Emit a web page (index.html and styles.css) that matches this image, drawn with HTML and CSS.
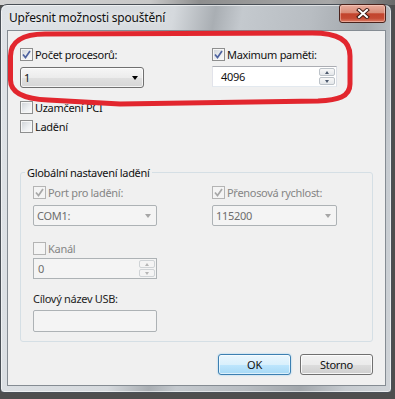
FILE: index.html
```html
<!DOCTYPE html>
<html lang="cs">
<head>
  <meta charset="UTF-8" />
  <meta name="viewport" content="width=device-width, initial-scale=1.0"/>
  <title>Upřesnit možnosti spouštění</title>
  <link rel="stylesheet" href="styles.css">
</head>
<body>
  <div class="window">
    <div class="titlebar">
      <span class="title">Upřesnit možnosti spouštění</span>
      <div class="close">
        <svg width="14" height="11" viewBox="0 0 14 11">
          <path class="x-out" d="M3 2 L11 9 M11 2 L3 9"/>
          <path class="x-in" d="M3 2 L11 9 M11 2 L3 9"/>
        </svg>
      </div>
    </div>

    <div class="client">
      <div class="top-grid">
        <div class="col">
          <div class="check">
            <span class="box on"><svg viewBox="0 0 11 11"><path d="M2 5.5 L4.5 8.5 L9 2"/></svg></span>
            <span>Počet procesorů:</span>
          </div>
          <div class="combo">
            <span>1</span>
            <span class="arrow"></span>
          </div>
        </div>
        <div class="col">
          <div class="check">
            <span class="box on"><svg viewBox="0 0 11 11"><path d="M2 5.5 L4.5 8.5 L9 2"/></svg></span>
            <span>Maximum paměti:</span>
          </div>
          <div class="spin">
            <span class="val wide">4096</span>
            <div class="spin-btns">
              <span class="sbtn"><span class="up"></span></span>
              <span class="sbtn"><span class="down"></span></span>
            </div>
          </div>
        </div>
      </div>

      <div class="check pci">
        <span class="box"></span>
        <span>Uzamčení PCI</span>
      </div>
      <div class="check debug">
        <span class="box"></span>
        <span>Ladění</span>
      </div>

      <fieldset class="group">
        <legend>Globální nastavení ladění</legend>
        <div class="group-grid">
          <div class="col">
            <div class="check off">
              <span class="box on"><svg viewBox="0 0 11 11"><path d="M2 5.5 L4.5 8.5 L9 2"/></svg></span>
              <span>Port pro ladění:</span>
            </div>
            <div class="combo off">
              <span>COM1:</span>
              <span class="arrow"></span>
            </div>

            <div class="check off kanal">
              <span class="box"></span>
              <span>Kanál</span>
            </div>
            <div class="spin off">
              <span class="val">0</span>
              <div class="spin-btns">
                <span class="sbtn"><span class="up"></span></span>
                <span class="sbtn"><span class="down"></span></span>
              </div>
            </div>

            <div class="label usb">Cílový název USB:</div>
            <div class="textbox off"></div>
          </div>
          <div class="col">
            <div class="check off">
              <span class="box on"><svg viewBox="0 0 11 11"><path d="M2 5.5 L4.5 8.5 L9 2"/></svg></span>
              <span>Přenosová rychlost:</span>
            </div>
            <div class="combo off">
              <span>115200</span>
              <span class="arrow"></span>
            </div>
          </div>
        </div>
      </fieldset>

      <div class="buttons">
        <div class="btn default">OK</div>
        <div class="btn">Storno</div>
      </div>
    </div>
  </div>

  <!-- red marker drawn over the screenshot -->
  <svg class="marker" width="395" height="399" viewBox="0 0 395 399">
    <path d="M45 34 L312 33 C338 33 350 40 350 56 L350 84 C350 97 338 100 318 101 L120 104 L48 100 C24 99 10.5 93 10.5 80 L10.5 56 C10.5 42 22 34 45 34 Z"/>
  </svg>
</body>
</html>
```

FILE: styles.css
```css
* {
  box-sizing: border-box;
}

html, body {
  margin: 0;
}

body {
  position: relative;
  width: 395px;
  height: 399px;
  overflow: hidden;
  font-family: "Segoe UI", "Noto Sans", sans-serif;
  font-size: 11px;
  letter-spacing: -0.3px;
  color: #111;
  background:
    linear-gradient(90deg, #d2d2d2 0, #c8c8c8 150px, #8e8e8e 200px, #a8a8a8 330px, #6a6a6a 395px) top / 100% 5px no-repeat,
    #4e4e4e;
}

/* window frame */
.window {
  margin-top: 4px;
  width: 392px;
  height: 389px;
  border: 1px solid #4a5057;
  border-radius: 7px 7px 4px 4px;
  padding: 0 5px 6px 6px;
  background: linear-gradient(100deg, #dfe3e7 0%, #d5d9dd 38%, #a9aeb3 47%, #c4c9ce 53%, #b8bdc2 68%, #a2a7ac 80%, #c6cbd0 90%, #d0d4d8 100%);
  box-shadow: inset 0 0 0 1px rgba(255, 255, 255, 0.55);
}

.titlebar {
  height: 25px;
  display: flex;
  align-items: center;
  justify-content: space-between;
  padding-left: 2px;
}

.title {
  font-size: 12px;
  letter-spacing: -0.2px;
  text-shadow: 0 0 6px rgba(255, 255, 255, 0.9);
}

.close {
  align-self: flex-start;
  margin-top: -1px;
  width: 47px;
  height: 19px;
  border: 1px solid #4a231c;
  border-radius: 3px;
  display: flex;
  align-items: center;
  justify-content: center;
  background: linear-gradient(#e8ad9d 0%, #d98c78 45%, #c2442d 52%, #c54a33 78%, #de8069 100%);
  box-shadow: inset 0 0 0 1px rgba(255, 220, 210, 0.45);
}

.close svg path {
  fill: none;
  stroke-linecap: square;
}

.x-out {
  stroke: #3d1a14;
  stroke-width: 4;
}

.x-in {
  stroke: #fff;
  stroke-width: 2;
}

/* client area */
.client {
  height: 356px;
  border: 1px solid #858c93;
  background: #f0f0f0;
  padding: 16px 12px 0 12px;
}

.top-grid {
  display: grid;
  grid-template-columns: 124px 125px;
  column-gap: 68px;
}

.group-grid {
  display: grid;
  grid-template-columns: 124px 125px;
  column-gap: 55px;
}

.check {
  display: flex;
  align-items: center;
  height: 15px;
  line-height: 15px;
  white-space: nowrap;
}

.box {
  width: 13px;
  height: 13px;
  flex: none;
  margin-right: 2px;
  border: 1px solid #8e8f8f;
  background: linear-gradient(135deg, #cdd1d6 0%, #eef0f2 60%, #fafafa 100%);
  box-shadow: inset 0 0 0 1px #f6f6f6;
  display: flex;
  align-items: center;
  justify-content: center;
}

.box svg {
  width: 11px;
  height: 11px;
}

.box svg path {
  fill: none;
  stroke: #4e63a0;
  stroke-width: 1.7;
}

.check.off {
  color: #858585;
}

.check.off .box {
  border-color: #b4b4b4;
  background: #f4f4f4;
  box-shadow: none;
}

.check.off .box svg path {
  stroke: #a8a8a8;
}

.pci {
  margin-top: 12px;
}

.debug {
  margin-top: 4px;
}

/* combo box */
.combo {
  margin-top: 5px;
  height: 21px;
  display: flex;
  align-items: center;
  justify-content: space-between;
  padding: 0 5px 0 3px;
  border: 1px solid #707070;
  border-radius: 3px;
  background: linear-gradient(#f6f6f6 0%, #ececec 50%, #e0e0e0 51%, #d6d6d6 100%);
  box-shadow: inset 0 0 0 1px rgba(255, 255, 255, 0.7);
}

.arrow {
  width: 0;
  height: 0;
  border-left: 3.5px solid transparent;
  border-right: 3.5px solid transparent;
  border-top: 4px solid #000;
}

.combo.off {
  color: #6d6d6d;
  border-color: #adb2b5;
  border-radius: 2px;
  background: #f4f4f4;
  box-shadow: none;
}

.combo.off .arrow {
  border-top-color: #a6a6a6;
}

/* numeric up-down */
.spin {
  margin-top: 4px;
  height: 21px;
  display: flex;
  align-items: center;
  justify-content: space-between;
  border: 1px solid;
  border-color: #abadb3 #dbdfe6 #e3e9ef #e2e3ea;
  background: #fff;
}

.val {
  padding-left: 4px;
}

.val.wide {
  padding-left: 8px;
}

.spin-btns {
  display: flex;
  flex-direction: column;
  gap: 1px;
  width: 16px;
  margin-right: 1px;
}

.sbtn {
  height: 8px;
  border: 1px solid #bcc2c8;
  border-radius: 2px;
  background: linear-gradient(#f8f8f8, #e4e7ea);
  display: flex;
  align-items: center;
  justify-content: center;
}

.up {
  border-left: 2.5px solid transparent;
  border-right: 2.5px solid transparent;
  border-bottom: 3px solid #4d5a6e;
}

.down {
  border-left: 2.5px solid transparent;
  border-right: 2.5px solid transparent;
  border-top: 3px solid #4d5a6e;
}

.spin.off {
  margin-top: 2px;
  color: #6d6d6d;
  border-color: #adb2b5;
  background: #f4f4f4;
}

.spin.off .sbtn {
  border-color: #cfd3d6;
  background: #f4f4f4;
}

.spin.off .up {
  border-bottom-color: #b5b5b5;
}

.spin.off .down {
  border-top-color: #b5b5b5;
}

/* group box */
.group {
  margin: 31px 0 0;
  padding: 5px 0 9px 12px;
  border: 1px solid #d5dfe5;
  border-radius: 3px;
  min-width: 0;
}

.group legend {
  padding: 0 2px;
  margin-left: -8px;
  line-height: 15px;
}

.kanal {
  margin-top: 15px;
}

.label {
  margin-top: 12px;
  line-height: 15px;
  color: #1e1e1e;
}

.textbox {
  margin-top: 4px;
  height: 22px;
  border: 1px solid #adb2b5;
  border-radius: 2px;
  background: #f4f4f4;
}

/* dialog buttons */
.buttons {
  display: flex;
  justify-content: flex-end;
  gap: 9px;
  margin-top: 12px;
}

.btn {
  width: 73px;
  height: 21px;
  display: flex;
  align-items: center;
  justify-content: center;
  border: 1px solid #707070;
  border-radius: 3px;
  background: linear-gradient(#f2f2f2 0%, #ebebeb 50%, #dddddd 51%, #cfcfcf 100%);
  box-shadow: inset 0 0 0 1px rgba(255, 255, 255, 0.8);
}

.btn.default {
  border-color: #3c7fb1;
  background: linear-gradient(#eaf6fd 0%, #d9f0fc 50%, #bee6fd 51%, #a7d9f5 100%);
  box-shadow: inset 0 0 0 1px rgba(255, 255, 255, 0.6), 0 0 2px #8ccbf0;
}

/* red marker */
.marker {
  position: absolute;
  top: 0;
  left: 0;
  pointer-events: none;
}

.marker path {
  fill: none;
  stroke: #e2262e;
  stroke-width: 5;
}
```
